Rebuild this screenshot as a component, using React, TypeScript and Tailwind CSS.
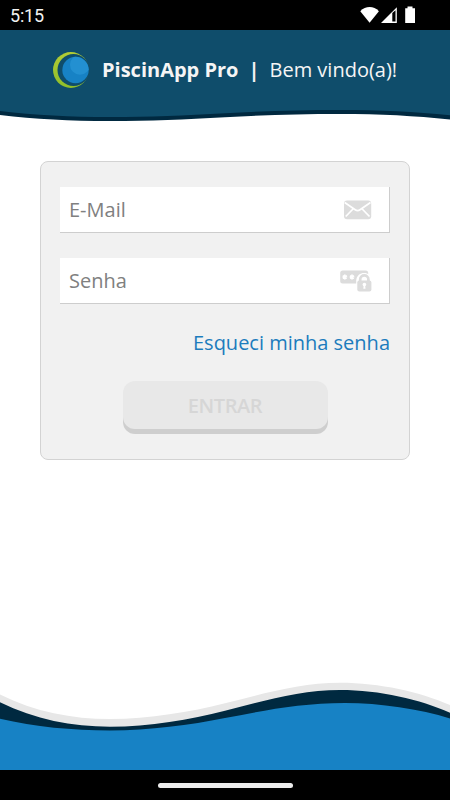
import { useState } from 'react'

function StatusBar() {
  return (
    <div className="flex h-[30px] shrink-0 items-center justify-between bg-black pr-[34px] pl-[10px] text-[#f2f2f2]">
      <span className="pt-[2px] font-[Roboto,sans-serif] text-[18px] leading-none tracking-[-0.2px]">5:15</span>
      <svg width="56" height="18" viewBox="0 0 56 18" fill="#fff">
        <path d="M0.3 5.2C5.5 -0.3 13.7 -0.3 18.9 5.2L9.6 16.7Z" />
        <path d="M21 16.9L36.8 1.3V16.9Z" />
        <path d="M32.3 7V15.6H35.5V4.2Z" fill="#000" />
        <path d="M45.2 2.2H47.5V0.5H52.5V2.2H55V16.9H45.2Z" />
      </svg>
    </div>
  )
}

function Logo() {
  return (
    <svg className="shrink-0" width="36" height="36" viewBox="0 0 36 36">
      <defs>
        <linearGradient id="ring" x1="0" y1="0" x2="0" y2="1">
          <stop offset="0" stopColor="#b2cc35" />
          <stop offset="1" stopColor="#8fbe2b" />
        </linearGradient>
        <mask id="crescent">
          <rect width="36" height="36" fill="#fff" />
          <circle cx="20.5" cy="18" r="16" fill="#000" />
        </mask>
        <clipPath id="ball">
          <circle cx="22.5" cy="18" r="13.2" />
        </clipPath>
      </defs>
      <circle cx="17.9" cy="18" r="17.9" fill="url(#ring)" mask="url(#crescent)" />
      <circle cx="22.5" cy="18" r="13.2" fill="#1782c5" />
      <circle cx="27" cy="12.7" r="10" fill="#2390d1" clipPath="url(#ball)" />
    </svg>
  )
}

function Header() {
  return (
    <header className="relative h-[92px] shrink-0">
      <svg className="absolute inset-0" width="450" height="92" viewBox="0 0 450 92">
        <path d="M0 0H450V89.5C415 85.8 380 84 340 84C300 84 262 85.2 225 87.2C185 89.5 150 91 110 91C70 91 35 89 0 85Z" fill="#002940" />
        <path d="M0 0H450V85.2C415 81.8 380 80 340 80C300 80 262 81.2 225 83.2C185 85.5 150 87 110 87C70 87 35 85 0 81Z" fill="#0f4d6b" />
      </svg>
      <div className="relative flex h-[79px] items-center pl-[53px] text-[20px] text-[#f5f5f5]">
        <Logo />
        <h1 className="ml-[13px] pt-px font-bold whitespace-pre">PiscinApp Pro</h1>
        <span className="ml-[10px] pt-px font-bold">|</span>
        <span className="ml-[10px] pt-px">Bem vindo(a)!</span>
      </div>
    </header>
  )
}

function MailIcon() {
  return (
    <svg className="mt-px" width="28" height="20" viewBox="0 0 28 20">
      <rect x="0" y="0.5" width="27.2" height="18.8" rx="3" fill="#dcdcdc" />
      <path d="M0.7 2.5L11.2 9.8Q13.6 11.5 16 9.8L26.5 2.5M1.7 16.5L9 9M25.5 16.5L18.2 9" fill="none" stroke="#fff" strokeWidth="1.7" />
    </svg>
  )
}

function PasswordIcon() {
  return (
    <svg className="mt-px" width="32" height="22" viewBox="0 0 32 22">
      <rect x="0.2" y="0.4" width="28" height="13" rx="2.5" fill="#dcdcdc" />
      <g stroke="#fff" strokeWidth="1.7">
        <path d="M4.8 4.6V9.4M2.7 5.8L6.9 8.2M6.9 5.8L2.7 8.2" />
        <path d="M12 4.6V9.4M9.9 5.8L14.1 8.2M14.1 5.8L9.9 8.2" />
      </g>
      <path d="M16.2 22V10.5C16.8 0.6 31.3 0.6 32 10.5V22Z" fill="#fff" />
      <path d="M20.2 11.5V9.5C20.2 4 28.4 4 28.4 9.5V11.5" fill="none" stroke="#dcdcdc" strokeWidth="2.7" />
      <rect x="17.3" y="10.4" width="14.1" height="11.2" rx="2" fill="#dcdcdc" />
      <circle cx="24.4" cy="14.6" r="1.8" fill="#fff" />
      <path d="M23.7 15H25.1L25.5 18.8H23.3Z" fill="#fff" />
    </svg>
  )
}

const fieldClass =
  'flex h-[46px] items-center border-r border-b border-[#cdcdcd] bg-white pl-[9px]'
const inputClass =
  'min-w-0 flex-1 bg-transparent text-[20px] text-[#808080] outline-none placeholder:text-[#808080]'

function LoginForm() {
  const [email, setEmail] = useState('')
  const [password, setPassword] = useState('')

  return (
    <form
      onSubmit={e => e.preventDefault()}
      className="mx-10 mt-[39px] flex h-[299px] flex-col rounded-[8px] border border-[#d3d3d3] bg-[#f1f1f1] px-[19px] pt-[25px]"
    >
      <label className={`${fieldClass} pr-[17px]`}>
        <input className={inputClass} type="email" placeholder="E-Mail" value={email} onChange={e => setEmail(e.target.value)} />
        <MailIcon />
      </label>
      <label className={`${fieldClass} mt-[25px] pr-[17px]`}>
        <input className={inputClass} type="password" placeholder="Senha" value={password} onChange={e => setPassword(e.target.value)} />
        <PasswordIcon />
      </label>
      <a href="#" className="mt-[24px] self-end text-[20px] leading-[30px] text-[#1c7cbd]">
        Esqueci minha senha
      </a>
      <button
        disabled={!email || !password}
        className="mt-[23px] h-[48px] w-[205px] self-center rounded-[12px] bg-[#e8e8e8] pt-[2px] text-[20px] font-semibold tracking-[-0.4px] text-[#d6d6d6] shadow-[0_5px_0_#cecece]"
      >
        ENTRAR
      </button>
    </form>
  )
}

function FooterWaves() {
  return (
    <svg className="mt-auto block shrink-0" width="450" height="100" viewBox="0 0 450 100">
      <path d="M0 24.5C35 42 72 49 110 49C150 49 190 42 225 33.3C262 24 300 12.7 340 12.7C380 12.7 420 22 450 35V100H0Z" fill="#e7e7e7" />
      <path d="M0 32.3C35 49.5 72 56.7 110 56.7C150 56.7 190 49.5 225 40.7C262 31.5 300 20 340 20C380 20 420 29.5 450 42.7V100H0Z" fill="#002940" />
      <path d="M0 48.8C35 57 72 60.4 110 60.4C150 60.4 190 55 225 48C262 41 300 33 345 33C380 33 420 39 450 48.5V100H0Z" fill="#1782c5" />
    </svg>
  )
}

export default function App() {
  return (
    <div className="flex h-[800px] w-[450px] flex-col overflow-hidden bg-white font-['Open_Sans',sans-serif]">
      <StatusBar />
      <Header />
      <LoginForm />
      <FooterWaves />
      <div className="flex h-[30px] shrink-0 items-center justify-center bg-black">
        <div className="h-[5px] w-[135px] rounded-full bg-[#ececec]" />
      </div>
    </div>
  )
}
